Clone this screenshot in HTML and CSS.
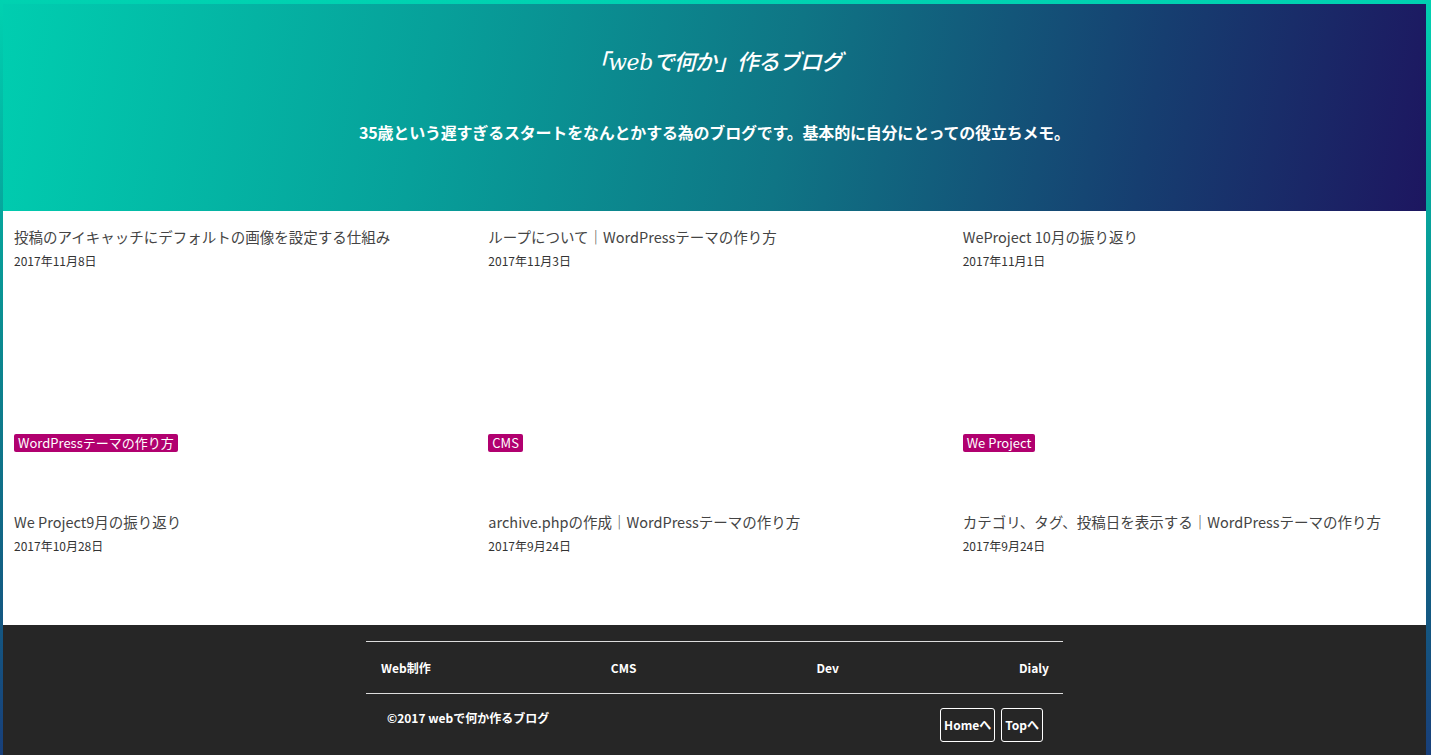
FILE: index.html
```html
<!DOCTYPE html>
<html lang="ja">
<head>
<meta charset="utf-8">
<title>「webで何か」作るブログ</title>
<link rel="stylesheet" href="styles.css">
</head>
<body>
<header class="site-header">
  <h1 class="site-title">「<span class="latin">web</span>で何か」作るブログ</h1>
  <p class="site-desc">35歳という遅すぎるスタートをなんとかする為のブログです。基本的に自分にとっての役立ちメモ。</p>
</header>
<main class="posts">
  <article class="post">
    <h2 class="post-title">投稿のアイキャッチにデフォルトの画像を設定する仕組み</h2>
    <p class="post-date">2017年11月8日</p>
    <div class="thumb"></div>
    <span class="tag">WordPressテーマの作り方</span>
  </article>
  <article class="post">
    <h2 class="post-title">ループについて｜WordPressテーマの作り方</h2>
    <p class="post-date">2017年11月3日</p>
    <div class="thumb"></div>
    <span class="tag">CMS</span>
  </article>
  <article class="post">
    <h2 class="post-title">WeProject 10月の振り返り</h2>
    <p class="post-date">2017年11月1日</p>
    <div class="thumb"></div>
    <span class="tag">We Project</span>
  </article>
  <article class="post">
    <h2 class="post-title">We Project9月の振り返り</h2>
    <p class="post-date">2017年10月28日</p>
  </article>
  <article class="post">
    <h2 class="post-title">archive.phpの作成｜WordPressテーマの作り方</h2>
    <p class="post-date">2017年9月24日</p>
  </article>
  <article class="post">
    <h2 class="post-title">カテゴリ、タグ、投稿日を表示する｜WordPressテーマの作り方</h2>
    <p class="post-date">2017年9月24日</p>
  </article>
</main>
<footer class="site-footer">
  <div class="footer-inner">
    <nav class="footer-nav">
      <a href="#">Web制作</a>
      <a href="#">CMS</a>
      <a href="#">Dev</a>
      <a href="#">Dialy</a>
    </nav>
    <div class="footer-bottom">
      <p class="copyright">©2017 webで何か作るブログ</p>
      <div class="footer-buttons">
        <a class="btn" href="#">Homeへ</a>
        <a class="btn" href="#">Topへ</a>
      </div>
    </div>
  </div>
</footer>
</body>
</html>
```
FILE: styles.css
```css
html {
  height: 100%;
  background: linear-gradient(to bottom, #00d2b1 0%, #0b8a90 45%, #183f7a 100%);
}
body {
  margin: 4px 5px 0 3px;
  min-height: calc(100% - 4px);
  display: flex;
  flex-direction: column;
  font-family: "Noto Sans CJK JP", "Noto Sans", sans-serif;
  color: #444;
  background: #262626;
}
.site-header {
  background: linear-gradient(100deg, #00ceb0 0%, #07a09a 30%, #0f7585 55%, #163e70 80%, #1d1660 100%);
  padding: 39px 20px 67px;
  text-align: center;
  color: #fff;
}
.site-title {
  margin: 0;
  height: 34px;
  font-size: 22px;
  line-height: 34px;
  font-weight: 500;
  font-style: italic;
  font-family: "Noto Sans CJK JP", sans-serif;
  letter-spacing: -1px;
}
.site-title .latin {
  font-family: "DejaVu Serif", "Liberation Serif", serif;
  font-size: 22px;
  letter-spacing: -0.5px;
}
.site-desc {
  margin: 43px 0 0;
  height: 24px;
  font-size: 16px;
  line-height: 24px;
  font-weight: 700;
  letter-spacing: -0.2px;
}
.posts {
  background: #fff;
  display: grid;
  grid-template-columns: repeat(3, 1fr);
  padding-bottom: 70px;
}
.post {
  padding: 14px 11px 0;
}
.post:nth-child(-n+3) {
  padding-bottom: 43px;
}
.post-title {
  margin: 0;
  font-size: 14.5px;
  line-height: 24px;
  font-weight: 400;
  color: #444;
}
.post-date {
  margin: 3px 0 0;
  font-size: 12px;
  line-height: 18px;
  color: #333;
}
.thumb {
  height: 159px;
}
.tag {
  display: inline-block;
  background: #b1006f;
  color: #fff;
  font-size: 13px;
  line-height: 18px;
  padding: 0 4px;
  border-radius: 2px;
}
.site-footer {
  flex: 1;
  background: #262626;
  padding: 16px 0 12px;
}
.footer-inner {
  width: 697px;
  margin: 0 auto;
}
.footer-nav {
  display: flex;
  justify-content: space-between;
  border-top: 1px solid #ddd;
  border-bottom: 1px solid #ddd;
  padding: 0 14px 0 15px;
  height: 51px;
  align-items: center;
}
.footer-nav a,
.copyright,
.btn {
  color: #fff;
  font-size: 12px;
  font-weight: 700;
  text-decoration: none;
}
.footer-bottom {
  display: flex;
  justify-content: space-between;
  align-items: flex-start;
  padding: 14px 20px 0 21px;
}
.copyright {
  margin: 1px 0 0;
  line-height: 18px;
}
.footer-buttons {
  display: flex;
  gap: 6px;
}
.btn {
  display: block;
  border: 1px solid #fff;
  border-radius: 3px;
  padding: 7px 3px;
  line-height: 18px;
}
```
